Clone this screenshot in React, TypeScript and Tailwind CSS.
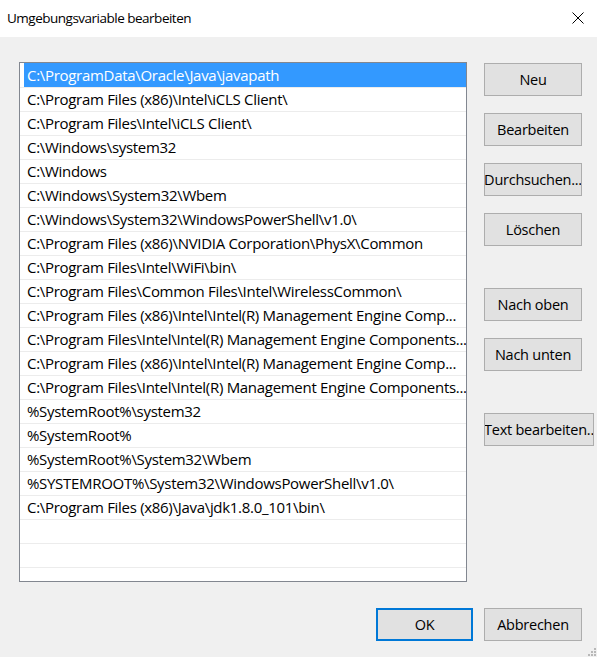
import React from "react";

const items = [
  "C:\\ProgramData\\Oracle\\Java\\javapath",
  "C:\\Program Files (x86)\\Intel\\iCLS Client\\",
  "C:\\Program Files\\Intel\\iCLS Client\\",
  "C:\\Windows\\system32",
  "C:\\Windows",
  "C:\\Windows\\System32\\Wbem",
  "C:\\Windows\\System32\\WindowsPowerShell\\v1.0\\",
  "C:\\Program Files (x86)\\NVIDIA Corporation\\PhysX\\Common",
  "C:\\Program Files\\Intel\\WiFi\\bin\\",
  "C:\\Program Files\\Common Files\\Intel\\WirelessCommon\\",
  "C:\\Program Files (x86)\\Intel\\Intel(R) Management Engine Comp...",
  "C:\\Program Files\\Intel\\Intel(R) Management Engine Components...",
  "C:\\Program Files (x86)\\Intel\\Intel(R) Management Engine Comp...",
  "C:\\Program Files\\Intel\\Intel(R) Management Engine Components...",
  "%SystemRoot%\\system32",
  "%SystemRoot%",
  "%SystemRoot%\\System32\\Wbem",
  "%SYSTEMROOT%\\System32\\WindowsPowerShell\\v1.0\\",
  "C:\\Program Files (x86)\\Java\\jdk1.8.0_101\\bin\\",
  "",
  "",
  "",
];

function Btn({ children, wide = false }: { children: React.ReactNode; wide?: boolean }) {
  return (
    <div
      className={`${wide ? "w-[110px]" : "w-[98px]"} h-[33px] shrink-0 overflow-hidden border border-[#adadad] bg-[#e1e1e1] flex items-center justify-center whitespace-nowrap text-[14.5px] tracking-[-0.25px] text-black`}
    >
      {children}
    </div>
  );
}

export default function App() {
  return (
    <div
      className="relative w-[597px] h-[657px] bg-[#f0f0f0] overflow-hidden flex flex-col"
      style={{ fontFamily: '"Open Sans", "Noto Sans", sans-serif' }}
    >
      <div className="h-[37px] bg-white flex items-center justify-between pl-[7px] pr-[13px] shrink-0">
        <span className="text-[13.5px] tracking-[-0.5px] text-black">Umgebungsvariable bearbeiten</span>
        <svg width="12" height="12" viewBox="0 0 12 12" className="mt-[-2px]">
          <path d="M0.5 0.5 L11.5 11.5 M11.5 0.5 L0.5 11.5" stroke="#000" strokeWidth="1" fill="none" />
        </svg>
      </div>

      <div className="flex pl-[19px] pt-[25px]">
        <div className="w-[448px] h-[520px] shrink-0 border border-[#828790] bg-white overflow-hidden">
          {items.map((t, i) =>
            i === 0 ? (
              <div key={i} className="h-[24px] flex pl-[4px]">
                <div className="flex-1 flex items-center pl-[3px] bg-[#3399ff] text-white text-[15px] tracking-[-0.3px] whitespace-nowrap overflow-hidden">
                  {t}
                </div>
              </div>
            ) : (
              <div
                key={i}
                className="h-[24px] flex items-center pl-[7px] border-t border-[#ececec] text-black text-[15px] tracking-[-0.3px] whitespace-nowrap overflow-hidden"
              >
                {t}
              </div>
            )
          )}
        </div>

        <div className="flex flex-col ml-[17px] pt-[1px]">
          <Btn>Neu</Btn>
          <div className="h-[17px]" />
          <Btn>Bearbeiten</Btn>
          <div className="h-[17px]" />
          <Btn>Durchsuchen...</Btn>
          <div className="h-[17px]" />
          <Btn>Löschen</Btn>
          <div className="h-[42px]" />
          <Btn>Nach oben</Btn>
          <div className="h-[17px]" />
          <Btn>Nach unten</Btn>
          <div className="h-[42px]" />
          <Btn wide>Text bearbeiten..</Btn>
        </div>
      </div>

      <div className="flex pl-[376px] pt-[26px] gap-[11px]">
        <div className="w-[97px] h-[33px] border-2 border-[#0078d7] bg-[#e1e1e1] flex items-center justify-center text-[14.5px] tracking-[-0.25px] text-black">
          OK
        </div>
        <Btn>Abbrechen</Btn>
      </div>

      <svg className="absolute right-0 bottom-0" width="12" height="12" viewBox="0 0 12 12">
        <rect x="9" y="3" width="2" height="2" fill="#b8b8b8" />
        <rect x="6" y="6" width="2" height="2" fill="#b8b8b8" />
        <rect x="9" y="6" width="2" height="2" fill="#b8b8b8" />
        <rect x="3" y="9" width="2" height="2" fill="#b8b8b8" />
        <rect x="6" y="9" width="2" height="2" fill="#b8b8b8" />
        <rect x="9" y="9" width="2" height="2" fill="#b8b8b8" />
      </svg>
    </div>
  );
}
